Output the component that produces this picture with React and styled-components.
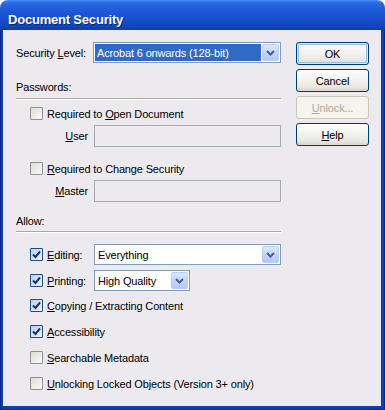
import React from 'react';
import styled, { createGlobalStyle } from 'styled-components';

const Global = createGlobalStyle`
  html, body { margin: 0; padding: 0; background: #ffffff; }
  body { font-family: "Liberation Sans", Arial, sans-serif; font-size: 11px; letter-spacing: -0.15px; color: #000; }
  * { box-sizing: border-box; }
`;

const Window = styled.div`
  width: 385px;
  height: 410px;
  display: flex;
  flex-direction: column;
`;

const TitleBar = styled.div`
  height: 30px;
  flex: none;
  border-radius: 8px 8px 0 0;
  background: linear-gradient(to bottom, #4a8cf4 0%, #2a69e2 10%, #1c57d6 40%, #164cc8 72%, #0e3fab 100%);
  display: flex;
  align-items: center;
  padding: 8px 0 0 8px;
  font: bold 13px "Liberation Sans", Arial, sans-serif;
  letter-spacing: -0.2px;
  color: #fff;
  text-shadow: 1px 1px 0 #0b2a7a;
`;

const Frame = styled.div`
  flex: 1;
  display: flex;
  background: #0b3fb6;
  padding: 0 4px 4px 3px;
  box-shadow: inset -1px -1px 0 #08298a, inset 1px 0 0 #08298a;
`;

const Body = styled.div`
  flex: 1;
  display: flex;
  gap: 15px;
  background: #eceaef;
  padding: 12px 11px 0 13px;
`;

const Main = styled.div`
  width: 265px;
  display: flex;
  flex-direction: column;
`;

const Side = styled.div`
  width: 73px;
  display: flex;
  flex-direction: column;
  gap: 4px;
`;

const Row = styled.div`
  display: flex;
  align-items: center;
  height: ${p => p.$h || 13}px;
  margin-top: ${p => p.$mt || 0}px;
  padding-left: ${p => p.$indent || 0}px;
`;

const Label = styled.label`
  width: ${p => p.$w}px;
  flex: none;
  white-space: nowrap;
  text-align: ${p => (p.$right ? 'right' : 'left')};
  padding-right: ${p => (p.$right ? 6 : 0)}px;
`;

const SectionTitle = styled.div`
  height: 13px;
  line-height: 13px;
  margin-top: ${p => p.$mt}px;
`;

const Rule = styled.div`
  height: 2px;
  margin-top: ${p => p.$mt}px;
  border-top: 1px solid #aca8a0;
  border-bottom: 1px solid #ffffff;
`;

const Select = styled.div`
  width: ${p => p.$w}px;
  height: 21px;
  flex: none;
  display: flex;
  align-items: stretch;
  border: 1px solid #7f9db9;
  background: #fff;
  padding: 1px;
`;

const SelectValue = styled.div`
  flex: 1;
  display: flex;
  align-items: center;
  padding-left: 2px;
  margin-right: 1px;
  white-space: nowrap;
  overflow: hidden;
  background: ${p => (p.$selected ? '#316ac5' : 'transparent')};
  color: ${p => (p.$selected ? '#fff' : '#000')};
`;

const DropButton = styled.div`
  width: 17px;
  flex: none;
  display: flex;
  align-items: center;
  justify-content: center;
  border: 1px solid #b9cdf7;
  border-radius: 2px;
  background: linear-gradient(to bottom, #dce7fd 0%, #c4d5fb 50%, #b3c8f6 100%);
`;

const TextField = styled.div`
  width: 187px;
  height: 22px;
  flex: none;
  border: 1px solid #a5acb2;
  background: #eceaef;
`;

const Button = styled.button`
  width: 73px;
  height: 23px;
  padding: 0;
  border: 1px solid #003c74;
  border-radius: 3px;
  font: 11px "Liberation Sans", Arial, sans-serif;
  letter-spacing: -0.15px;
  color: #000;
  background: linear-gradient(to bottom, #ffffff 0%, #f5f5f2 35%, #e9e8e2 80%, #d8d4cb 100%);
  ${p => p.$default && `box-shadow: inset 0 0 0 1px #cde5ff, inset 0 0 0 2px #9ec0ef;`}
  &:disabled {
    border-color: #c9c7ba;
    color: #aca899;
    background: #f4f3ee;
  }
`;

const Check = styled.span`
  width: 13px;
  height: 13px;
  flex: none;
  margin-right: 4px;
  border: 1px solid ${p => (p.$on ? '#1c5180' : '#8e9194')};
  border-radius: 1px;
  display: flex;
  align-items: center;
  justify-content: center;
  background: ${p =>
    p.$on
      ? 'linear-gradient(135deg, #b7cdef 0%, #d9e6fa 60%, #f2f6fd 100%)'
      : 'linear-gradient(135deg, #dcdcd7 0%, #eeeeea 60%, #fbfbfa 100%)'};
`;

const U = styled.span`
  text-decoration: underline;
`;

const Chevron = () => (
  <svg width="9" height="6" viewBox="0 0 9 6">
    <path d="M1 1 L4.5 4.5 L8 1" fill="none" stroke="#4d6185" strokeWidth="2" />
  </svg>
);

const Tick = () => (
  <svg width="9" height="9" viewBox="0 0 9 9">
    <path d="M1 4.5 L3.5 7 L8 1.5" fill="none" stroke="#1b2f6e" strokeWidth="2" />
  </svg>
);

const CheckRow = ({ on, mt, children, h }) => (
  <Row $mt={mt} $indent={14} $h={h}>
    <Check $on={on}>{on && <Tick />}</Check>
    {children}
  </Row>
);

export default function App() {
  return (
    <>
      <Global />
      <Window>
        <TitleBar>Document Security</TitleBar>
        <Frame>
          <Body>
            <Main>
              <Row $h={21}>
                <Label $w={77}>
                  Security <U>L</U>evel:
                </Label>
                <Select $w={188}>
                  <SelectValue $selected>Acrobat 6 onwards (128-bit)</SelectValue>
                  <DropButton>
                    <Chevron />
                  </DropButton>
                </Select>
              </Row>

              <SectionTitle $mt={18}>Passwords:</SectionTitle>
              <Rule $mt={4} />

              <CheckRow mt={7}>
                <span>
                  Required to <U>O</U>pen Document
                </span>
              </CheckRow>
              <Row $h={22} $mt={5}>
                <Label $w={78} $right>
                  <U>U</U>ser
                </Label>
                <TextField />
              </Row>

              <CheckRow mt={15}>
                <span>
                  <U>R</U>equired to Change Security
                </span>
              </CheckRow>
              <Row $h={22} $mt={5}>
                <Label $w={78} $right>
                  <U>M</U>aster
                </Label>
                <TextField />
              </Row>

              <SectionTitle $mt={13}>Allow:</SectionTitle>
              <Rule $mt={3} />

              <CheckRow on mt={11} h={21}>
                <Label $w={47}>
                  <U>E</U>diting:
                </Label>
                <Select $w={187}>
                  <SelectValue>Everything</SelectValue>
                  <DropButton>
                    <Chevron />
                  </DropButton>
                </Select>
              </CheckRow>
              <CheckRow on mt={5} h={21}>
                <Label $w={47}>
                  <U>P</U>rinting:
                </Label>
                <Select $w={96}>
                  <SelectValue>High Quality</SelectValue>
                  <DropButton>
                    <Chevron />
                  </DropButton>
                </Select>
              </CheckRow>
              <CheckRow on mt={8}>
                <span>
                  <U>C</U>opying / Extracting Content
                </span>
              </CheckRow>
              <CheckRow on mt={13}>
                <span>
                  <U>A</U>ccessibility
                </span>
              </CheckRow>
              <CheckRow mt={13}>
                <span>
                  <U>S</U>earchable Metadata
                </span>
              </CheckRow>
              <CheckRow mt={13}>
                <span>
                  <U>U</U>nlocking Locked Objects (Version 3+ only)
                </span>
              </CheckRow>
            </Main>
            <Side>
              <Button $default>OK</Button>
              <Button>Cancel</Button>
              <Button disabled>
                <U>U</U>nlock...
              </Button>
              <Button>
                <U>H</U>elp
              </Button>
            </Side>
          </Body>
        </Frame>
      </Window>
    </>
  );
}
